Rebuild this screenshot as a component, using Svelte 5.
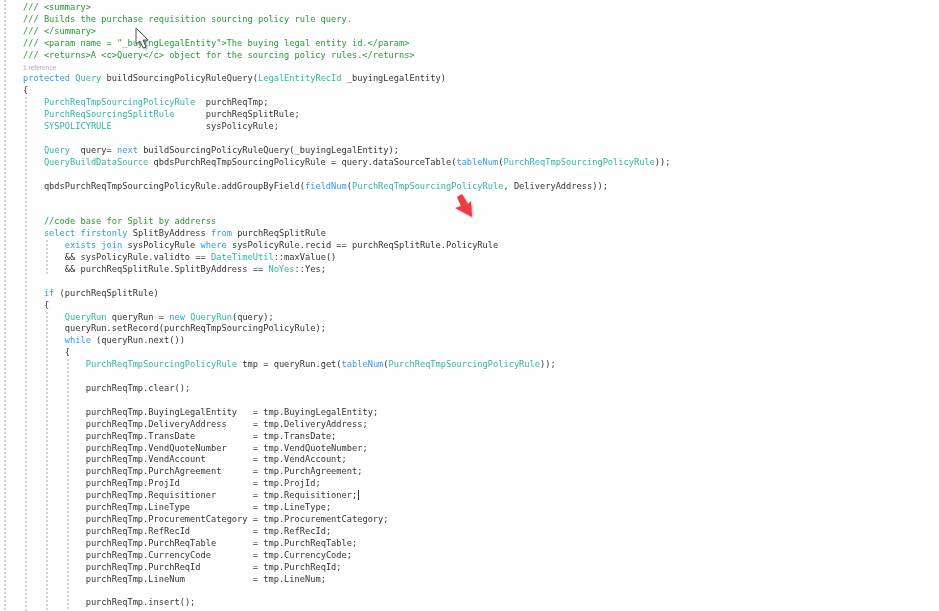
<script lang="ts">
  const source = `/// <summary>
/// Builds the purchase requisition sourcing policy rule query.
/// </summary>
/// <param name = "_buyingLegalEntity">The buying legal entity id.</param>
/// <returns>A <c>Query</c> object for the sourcing policy rules.</returns>
@1 reference
protected Query buildSourcingPolicyRuleQuery(LegalEntityRecId _buyingLegalEntity)
{
    PurchReqTmpSourcingPolicyRule  purchReqTmp;
    PurchReqSourcingSplitRule      purchReqSplitRule;
    SYSPOLICYRULE                  sysPolicyRule;

    Query  query= next buildSourcingPolicyRuleQuery(_buyingLegalEntity);
    QueryBuildDataSource qbdsPurchReqTmpSourcingPolicyRule = query.dataSourceTable(tableNum(PurchReqTmpSourcingPolicyRule));

    qbdsPurchReqTmpSourcingPolicyRule.addGroupByField(fieldNum(PurchReqTmpSourcingPolicyRule, DeliveryAddress));


    //code base for Split by addrerss
    select firstonly SplitByAddress from purchReqSplitRule
        exists join sysPolicyRule where sysPolicyRule.recid == purchReqSplitRule.PolicyRule
        && sysPolicyRule.validto == DateTimeUtil::maxValue()
        && purchReqSplitRule.SplitByAddress == NoYes::Yes;

    if (purchReqSplitRule)
    {
        QueryRun queryRun = new QueryRun(query);
        queryRun.setRecord(purchReqTmpSourcingPolicyRule);
        while (queryRun.next())
        {
            PurchReqTmpSourcingPolicyRule tmp = queryRun.get(tableNum(PurchReqTmpSourcingPolicyRule));

            purchReqTmp.clear();

            purchReqTmp.BuyingLegalEntity   = tmp.BuyingLegalEntity;
            purchReqTmp.DeliveryAddress     = tmp.DeliveryAddress;
            purchReqTmp.TransDate           = tmp.TransDate;
            purchReqTmp.VendQuoteNumber     = tmp.VendQuoteNumber;
            purchReqTmp.VendAccount         = tmp.VendAccount;
            purchReqTmp.PurchAgreement      = tmp.PurchAgreement;
            purchReqTmp.ProjId              = tmp.ProjId;
            purchReqTmp.Requisitioner       = tmp.Requisitioner;
            purchReqTmp.LineType            = tmp.LineType;
            purchReqTmp.ProcurementCategory = tmp.ProcurementCategory;
            purchReqTmp.RefRecId            = tmp.RefRecId;
            purchReqTmp.PurchReqTable       = tmp.PurchReqTable;
            purchReqTmp.CurrencyCode        = tmp.CurrencyCode;
            purchReqTmp.PurchReqId          = tmp.PurchReqId;
            purchReqTmp.LineNum             = tmp.LineNum;

            purchReqTmp.insert();`.split("\n");

  const keywords = new Set(["protected", "next", "select", "firstonly", "from", "exists", "join", "where", "if", "new", "while", "tableNum", "fieldNum"]);
  const types = new Set(["Query", "LegalEntityRecId", "PurchReqTmpSourcingPolicyRule", "PurchReqSourcingSplitRule", "SYSPOLICYRULE", "QueryBuildDataSource", "DateTimeUtil", "NoYes", "QueryRun"]);

  // the caret sits after this line's text
  const caretLine = 41;

  function tokens(line: string) {
    const trimmed = line.trimStart();
    if (trimmed.startsWith("//")) {
      return [{ text: line, cls: "comment" }];
    }
    return (line.match(/\w+|\W+/g) ?? []).map((text, i, all) => {
      const afterDot = i > 0 && all[i - 1].endsWith(".");
      if (keywords.has(text) && !afterDot) return { text, cls: "keyword" };
      if (types.has(text)) return { text, cls: "type" };
      return { text, cls: "" };
    });
  }
</script>

<main class="editor">
  <div class="guide g0"></div>
  <div class="guide g1"></div>
  <div class="guide g2a"></div>
  <div class="guide g2b"></div>
  <div class="guide g3"></div>

  <pre class="code">{#each source as line, i}{#if line.startsWith("@")}<div class="line"><span class="lens">{line.slice(1)}</span></div>{:else}<div class="line">{#each tokens(line) as t}<span class={t.cls}>{t.text}</span>{/each}{#if i === caretLine}<span class="caret"></span>{/if}</div>{/if}{/each}</pre>

  <svg class="overlay" viewBox="0 0 939 611" width="939" height="611" aria-hidden="true">
    <defs>
      <filter id="soft" x="-40%" y="-40%" width="200%" height="200%">
        <feGaussianBlur stdDeviation="1.2" />
      </filter>
    </defs>
    <polygon points="138,30 138,46 142,43 145,50 148,49 145,42 150,42" fill="#555" opacity="0.5" filter="url(#soft)" />
    <polygon points="136,28 136,44 140,41 143,48 146,47 143,40 148,40" fill="#fff" stroke="#555" stroke-width="1" />
    <polygon points="458,198 463,195 469,205 472,202 473,218 456,209 462,207" fill="#777" opacity="0.55" filter="url(#soft)" />
    <polygon points="457,197 462,194 468,204 471,201 472,217 455,208 461,206" fill="#ee3b41" />
  </svg>
</main>

<style>
  :global(body) {
    margin: 0;
    background: #fff;
  }

  .editor {
    position: relative;
    width: 939px;
    height: 611px;
    overflow: hidden;
    background: #fefefe;
    filter: blur(0.4px);
  }

  .code {
    margin: 0;
    padding: 2px 0 0 23px;
    font-family: "DejaVu Sans Mono", monospace;
    font-size: 8.69px;
    line-height: 11.92px;
    color: #333;
    white-space: pre;
  }

  .line {
    height: 11.92px;
  }

  .comment {
    color: #2a9636;
  }

  .keyword {
    color: #3598e8;
  }

  .type {
    color: #2fb5a5;
  }

  .lens {
    font-family: "Liberation Sans", sans-serif;
    font-size: 6.6px;
    color: #b3a6c0;
  }

  .caret {
    display: inline-block;
    width: 0;
    height: 10px;
    margin-left: 1px;
    border-left: 1px solid #333;
    vertical-align: -2px;
  }

  .guide {
    position: absolute;
    width: 2px;
    background: repeating-linear-gradient(to bottom, #d2d2d2 0 2px, transparent 2px 4px);
  }

  .g0 {
    left: 4px;
    top: 0;
    bottom: 0;
  }

  .g1 {
    left: 25px;
    top: 97px;
    bottom: 0;
  }

  .g2a {
    left: 46px;
    top: 240px;
    height: 36px;
  }

  .g2b {
    left: 46px;
    top: 312px;
    bottom: 0;
  }

  .g3 {
    left: 67px;
    top: 359px;
    bottom: 0;
  }

  .overlay {
    position: absolute;
    left: 0;
    top: 0;
  }
</style>
